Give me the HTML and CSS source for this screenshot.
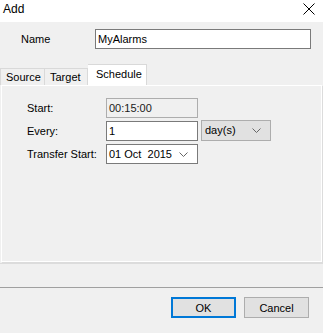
FILE: index.html
```html
<!DOCTYPE html>
<html>
<head>
<meta charset="utf-8">
<link rel="stylesheet" href="styles.css">
</head>
<body>
<div class="window">
  <div class="titlebar">
    <span class="title">Add</span>
    <svg class="close" width="12" height="12" viewBox="0 0 12 12"><path d="M0.5 0.5 L11.5 11.5 M11.5 0.5 L0.5 11.5" stroke="#000" stroke-width="1" fill="none"/></svg>
  </div>
  <div class="body">
    <div class="namerow">
      <span class="namelabel">Name</span>
      <div class="input name">MyAlarms</div>
    </div>
    <div class="tabs">
      <div class="tab">Source</div>
      <div class="tab">Target</div>
      <div class="tab active">Schedule</div>
    </div>
    <div class="panel">
      <div class="form">
        <span class="label">Start:</span>
        <div class="row"><div class="input field disabled">00:15:00</div></div>
        <span class="label">Every:</span>
        <div class="row">
          <div class="input field">1</div>
          <div class="combo">day(s)<svg class="chev" width="9" height="5" viewBox="0 0 9 5"><path d="M0.5 0.5 L4.5 4.5 L8.5 0.5" stroke="#666" fill="none"/></svg></div>
        </div>
        <span class="label">Transfer Start:</span>
        <div class="row"><div class="input field date"><span>01 Oct&nbsp; 2015</span><svg class="chev" width="9" height="5" viewBox="0 0 9 5"><path d="M0.5 0.5 L4.5 4.5 L8.5 0.5" stroke="#666" fill="none"/></svg></div></div>
      </div>
    </div>
    <div class="sep1"></div>
    <div class="sep2"></div>
    <div class="buttons">
      <button class="btn ok">OK</button>
      <button class="btn">Cancel</button>
    </div>
  </div>
</div>
</body>
</html>
```
FILE: styles.css
```css
html, body { margin: 0; padding: 0; }
body {
  width: 323px;
  height: 333px;
  background: #f0f0f0;
  font-family: "Liberation Sans", Arial, sans-serif;
  font-size: 11px;
  color: #000;
  overflow: hidden;
}
.window { width: 323px; height: 333px; display: flex; flex-direction: column; }
.titlebar {
  height: 22px;
  background: #fff;
  display: flex;
  align-items: center;
  justify-content: space-between;
  padding: 0 8px 0 3px;
}
.title { font-size: 12px; margin-top: -4px; }
.close { margin-top: -5px; }
.body { flex: 1; display: flex; flex-direction: column; }
.namerow {
  display: flex;
  align-items: center;
  margin-top: 7px;
  height: 20px;
}
.namelabel { width: 74px; padding-left: 21px; }
.input {
  box-sizing: border-box;
  height: 20px;
  border: 1px solid #7a7a7a;
  background: #fff;
  padding: 0 2px;
  display: flex;
  align-items: center;
}
.name { width: 216px; }
.tabs {
  display: flex;
  align-items: flex-end;
  margin-top: 15px;
  height: 21px;
  padding-left: 0;
}
.tab {
  box-sizing: border-box;
  height: 17px;
  border: 1px solid #d9d9d9;
  border-bottom: none;
  background: #f0f0f0;
  padding: 0 5px;
  display: flex;
  align-items: center;
  font-size: 11px;
}
.tab:first-child { width: 45px; }
.tab:nth-child(2) { width: 43px; border-left: none; }
.tab.active {
  height: 21px;
  width: 59px;
  background: #fff;
  border-left: none;
  padding-left: 8px;
  padding-bottom: 2px;
}
.panel {
  box-sizing: border-box;
  margin-left: 1px;
  width: 321px;
  height: 177px;
  border: 1px solid #fff;
  background: #f0f0f0;
  box-shadow: 1px 1px 0 #dcdcdc;
}
.form {
  display: grid;
  grid-template-columns: 79px auto;
  row-gap: 3px;
  padding: 12px 0 0 25px;
  align-items: center;
}
.label { height: 20px; display: flex; align-items: center; }
.row { display: flex; align-items: center; gap: 3px; }
.field { width: 92px; }
.disabled { background: #f0f0f0; border-color: #adadad; color: #1a1a1a; }
.combo {
  box-sizing: border-box;
  width: 70px;
  height: 21px;
  margin-top: -2px;
  border: 1px solid #adadad;
  background: #e1e1e1;
  display: flex;
  align-items: center;
  justify-content: space-between;
  padding: 0 9px 0 3px;
}
.date { justify-content: space-between; padding-right: 9px; }
.sep1 { height: 1px; background: #dcdcdc; margin-top: 1px; }
.sep2 { height: 1px; background: #a0a0a0; margin-top: 23px; }
.buttons {
  display: flex;
  justify-content: flex-end;
  gap: 8px;
  padding: 9px 14px 0 0;
}
.btn {
  box-sizing: border-box;
  width: 65px;
  height: 21px;
  border: 1px solid #adadad;
  background: #e1e1e1;
  font-family: "Liberation Sans", Arial, sans-serif;
  font-size: 11px;
  color: #000;
  padding: 0;
}
.btn.ok { border: 2px solid #0078d7; }
```
